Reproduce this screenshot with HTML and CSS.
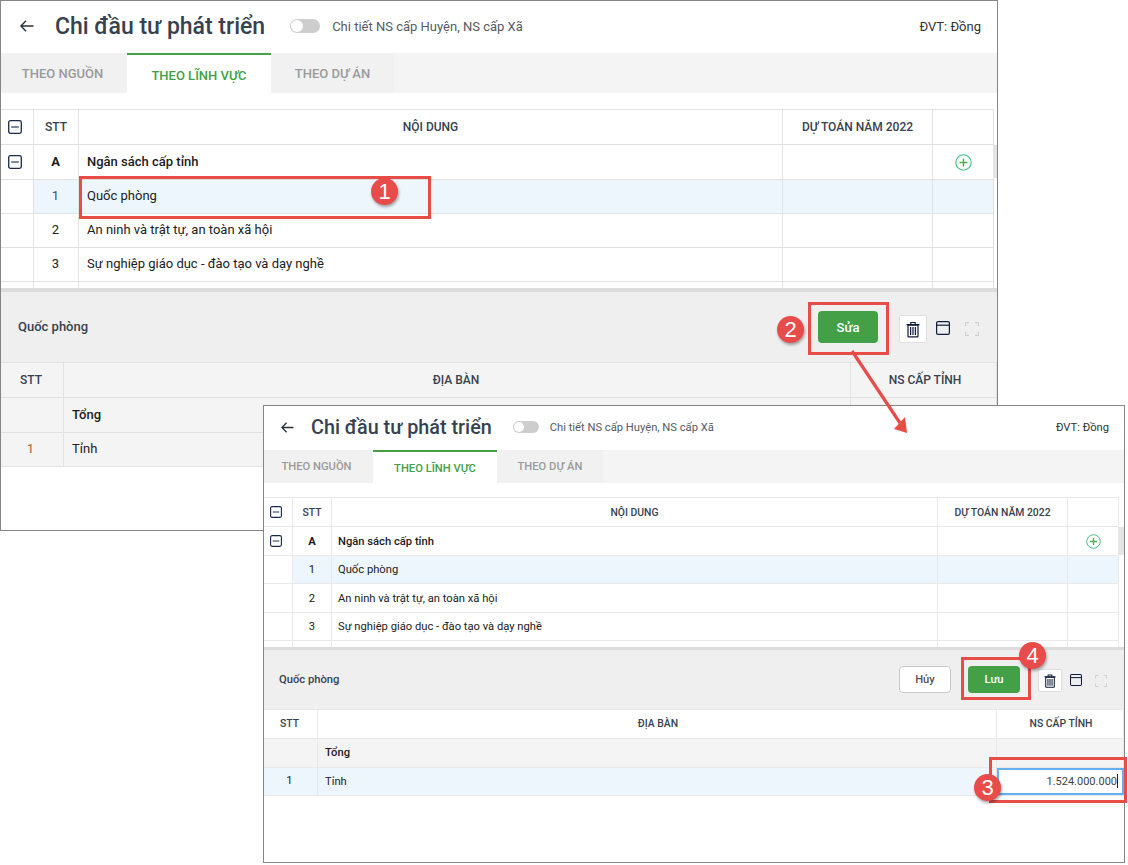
FILE: index.html
```html
<!DOCTYPE html>
<html lang="vi">
<head>
<meta charset="utf-8">
<title>Chi đầu tư phát triển</title>
<link rel="stylesheet" href="styles.css">
</head>
<body>
<svg class="defs" width="0" height="0" aria-hidden="true">
  <symbol id="i-back" viewBox="0 0 14 12"><path d="M13.5 6H1M6 .8 .9 6 6 11.2" fill="none" stroke="currentColor" stroke-width="1.4"/></symbol>
  <symbol id="i-minus" viewBox="0 0 14 14"><rect x=".7" y=".7" width="12.6" height="12.6" rx="1.8" fill="#fff" stroke="#1b2a4a" stroke-width="1.3"/><path d="M3.2 7h7.6" stroke="#5d6a80" stroke-width="1.6"/></symbol>
  <symbol id="i-plus" viewBox="0 0 17 17"><circle cx="8.5" cy="8.5" r="7.7" fill="none" stroke="#3fbf7f" stroke-width="1.1"/><path d="M8.5 4.5v8M4.5 8.5h8" stroke="#4caf50" stroke-width="1.5"/></symbol>
  <symbol id="i-trash" viewBox="0 0 14 16"><path d="M.5 3.2h13M4.8 3V1h4.4v2" fill="none" stroke="#101c3c" stroke-width="1.2"/><path d="M2 3.6h10v11.2a.6.6 0 0 1-.6.6H2.6a.6.6 0 0 1-.6-.6z" fill="none" stroke="#101c3c" stroke-width="1.2"/><path d="M4.6 5.6v8M7 5.6v8M9.4 5.6v8" stroke="#101c3c" stroke-width="1.2"/></symbol>
  <symbol id="i-panel" viewBox="0 0 14 14"><rect x=".6" y=".6" width="12.8" height="12.8" rx="1.4" fill="none" stroke="#101c3c" stroke-width="1.2"/><path d="M.6 4.2h12.8" stroke="#101c3c" stroke-width="1.2"/></symbol>
  <symbol id="i-full" viewBox="0 0 14 14"><path d="M.6 4V.6H4M10 .6h3.4V4M13.4 10v3.4H10M4 13.4H.6V10" fill="none" stroke="#cfcfcf" stroke-width="1.1"/></symbol>
</svg>

<section class="window win-a">
  <header class="win-header">
    <svg class="ico-back"><use href="#i-back"/></svg>
    <h1 class="win-title">Chi đầu tư phát triển</h1>
    <span class="toggle"><span class="knob"></span></span>
    <span class="toggle-label">Chi tiết NS cấp Huyện, NS cấp Xã</span>
    <span class="unit">ĐVT: Đồng</span>
  </header>
  <nav class="tabs">
    <span class="tab tab-1">THEO NGUỒN</span>
    <span class="tab tab-2 active">THEO LĨNH VỰC</span>
    <span class="tab tab-3">THEO DỰ ÁN</span>
  </nav>
  <div class="grid-area">
    <div class="row row-head">
      <div class="cell c-check"><svg class="ico-check"><use href="#i-minus"/></svg></div>
      <div class="cell center">STT</div><div class="cell center">NỘI DUNG</div><div class="cell center">DỰ TOÁN NĂM 2022</div><div class="cell"></div>
    </div>
    <div class="row row-a strong">
      <div class="cell c-check"><svg class="ico-check"><use href="#i-minus"/></svg></div>
      <div class="cell center">A</div><div class="cell">Ngân sách cấp tỉnh</div><div class="cell"></div><div class="cell center"><svg class="ico-plus"><use href="#i-plus"/></svg></div>
    </div>
    <div class="row row-b selected">
      <div class="cell plain"></div><div class="cell center num-blue">1</div><div class="cell">Quốc phòng</div><div class="cell"></div><div class="cell"></div>
    </div>
    <div class="row row-b">
      <div class="cell"></div><div class="cell center">2</div><div class="cell">An ninh và trật tự, an toàn xã hội</div><div class="cell"></div><div class="cell"></div>
    </div>
    <div class="row row-b">
      <div class="cell"></div><div class="cell center">3</div><div class="cell">Sự nghiệp giáo dục - đào tạo và dạy nghề</div><div class="cell"></div><div class="cell"></div>
    </div>
    <div class="row row-b">
      <div class="cell"></div><div class="cell"></div><div class="cell"></div><div class="cell"></div><div class="cell"></div>
    </div>
    <span class="scroll-thumb"></span>
  </div>
  <div class="splitter"></div>
  <div class="panel-bar">
    <span class="panel-title">Quốc phòng</span>
    <span class="actions">
      <button class="btn btn-green btn-edit">Sửa</button>
      <span class="icon-btn"><svg class="ico-trash"><use href="#i-trash"/></svg></span>
      <svg class="ico-panel"><use href="#i-panel"/></svg>
      <svg class="ico-full"><use href="#i-full"/></svg>
    </span>
  </div>
  <div class="lower">
    <div class="lrow lrow-head">
      <div class="cell center">STT</div><div class="cell center">ĐỊA BÀN</div><div class="cell center">NS CẤP TỈNH</div>
    </div>
    <div class="lrow lrow-total strong">
      <div class="cell"></div><div class="cell">Tổng</div><div class="cell"></div>
    </div>
    <div class="lrow lrow-item">
      <div class="cell center num-amber">1</div><div class="cell">Tỉnh</div><div class="cell"></div>
    </div>
  </div>
</section>

<section class="window win-b">
  <header class="win-header">
    <svg class="ico-back"><use href="#i-back"/></svg>
    <h1 class="win-title">Chi đầu tư phát triển</h1>
    <span class="toggle"><span class="knob"></span></span>
    <span class="toggle-label">Chi tiết NS cấp Huyện, NS cấp Xã</span>
    <span class="unit">ĐVT: Đồng</span>
  </header>
  <nav class="tabs">
    <span class="tab tab-1">THEO NGUỒN</span>
    <span class="tab tab-2 active">THEO LĨNH VỰC</span>
    <span class="tab tab-3">THEO DỰ ÁN</span>
  </nav>
  <div class="grid-area">
    <div class="row row-head">
      <div class="cell c-check"><svg class="ico-check"><use href="#i-minus"/></svg></div>
      <div class="cell center">STT</div><div class="cell center">NỘI DUNG</div><div class="cell center">DỰ TOÁN NĂM 2022</div><div class="cell"></div>
    </div>
    <div class="row row-a strong">
      <div class="cell c-check"><svg class="ico-check"><use href="#i-minus"/></svg></div>
      <div class="cell center">A</div><div class="cell">Ngân sách cấp tỉnh</div><div class="cell"></div><div class="cell center"><svg class="ico-plus"><use href="#i-plus"/></svg></div>
    </div>
    <div class="row row-b selected">
      <div class="cell plain"></div><div class="cell center">1</div><div class="cell">Quốc phòng</div><div class="cell"></div><div class="cell"></div>
    </div>
    <div class="row row-b">
      <div class="cell"></div><div class="cell center">2</div><div class="cell">An ninh và trật tự, an toàn xã hội</div><div class="cell"></div><div class="cell"></div>
    </div>
    <div class="row row-b">
      <div class="cell"></div><div class="cell center">3</div><div class="cell">Sự nghiệp giáo dục - đào tạo và dạy nghề</div><div class="cell"></div><div class="cell"></div>
    </div>
    <div class="row row-b">
      <div class="cell"></div><div class="cell"></div><div class="cell"></div><div class="cell"></div><div class="cell"></div>
    </div>
    <span class="scroll-thumb"></span>
  </div>
  <div class="splitter"></div>
  <div class="panel-bar">
    <span class="panel-title">Quốc phòng</span>
    <span class="actions">
      <button class="btn btn-outline">Hủy</button>
      <button class="btn btn-green btn-save">Lưu</button>
      <span class="icon-btn"><svg class="ico-trash"><use href="#i-trash"/></svg></span>
      <svg class="ico-panel"><use href="#i-panel"/></svg>
      <svg class="ico-full"><use href="#i-full"/></svg>
    </span>
  </div>
  <div class="lower">
    <div class="lrow lrow-head">
      <div class="cell center">STT</div><div class="cell center">ĐỊA BÀN</div><div class="cell center">NS CẤP TỈNH</div>
    </div>
    <div class="lrow lrow-total strong">
      <div class="cell"></div><div class="cell">Tổng</div><div class="cell"></div>
    </div>
    <div class="lrow lrow-item">
      <div class="cell center">1</div><div class="cell">Tỉnh</div><div class="cell input-cell"><span class="amount">1.524.000.000</span></div>
    </div>
  </div>
</section>

<span class="mark mark-1"></span>
<span class="mark mark-2"></span>
<span class="mark mark-3"></span>
<span class="mark mark-4"></span>
<svg class="arrow" width="70" height="95" viewBox="0 0 70 95"><path d="M1 1 49 73" stroke="#e84c47" stroke-width="3.2"/><path d="M56 83 43 79 54 67z" fill="#e84c47"/></svg>
<span class="badge badge-1">1</span>
<span class="badge badge-2">2</span>
<span class="badge badge-3">3</span>
<span class="badge badge-4">4</span>
</body>
</html>
```
FILE: styles.css
```css
* { box-sizing: border-box; }
html, body { margin: 0; padding: 0; }
body {
  width: 1128px;
  height: 865px;
  position: relative;
  overflow: hidden;
  background: #fff;
  font-family: Roboto, "Noto Sans", sans-serif;
  color: #212121;
}
.defs { position: absolute; }

/* windows on the canvas */
.window {
  position: absolute;
  display: flex;
  flex-direction: column;
  background: #fff;
  border: 1px solid #858585;
  overflow: hidden;
  font-size: var(--fs);
}
.win-a {
  left: 0; top: 0; width: 998px; height: 531px;
  --fs: 13px; --fs-head: 12px; --line: #e2e2e2;
  --cols: 33px 45px 704px 150px 61px;
  --lcols: 63px 787px 146px;
}
.win-b {
  left: 263px; top: 405px; width: 862px; height: 458px;
  --fs: 11.2px; --fs-head: 10.4px; --line: #e9e9e9;
  --cols: 29px 39px 606px 130px 51px;
  --lcols: 54px 679px 127px;
}

/* header */
.win-header { display: flex; align-items: center; flex: none; }
.win-a .win-header { height: 52px; padding: 0 16px 2px 19px; }
.win-b .win-header { height: 44px; padding: 0 15px 2px 17px; }
.ico-back { color: #263238; flex: none; }
.win-a .ico-back { width: 14px; height: 12px; margin-right: 21px; }
.win-b .ico-back { width: 13px; height: 11px; margin-right: 17px; }
.win-title { margin: 0; font-weight: 500; color: #37424f; white-space: nowrap; }
.win-a .win-title { font-size: 23px; }
.win-b .win-title { font-size: 19.8px; }
.toggle { position: relative; flex: none; background: #cdcdcd; border-radius: 8px; }
.win-a .toggle { width: 30px; height: 14px; margin-left: 25px; }
.win-b .toggle { width: 26px; height: 12px; margin-left: 21px; }
.knob { position: absolute; left: 1px; top: 1px; bottom: 1px; aspect-ratio: 1; background: #fff; border-radius: 50%; }
.toggle-label { color: #555b63; white-space: nowrap; }
.win-a .toggle-label { margin-left: 12px; }
.win-b .toggle-label { margin-left: 11px; }
.unit { margin-left: auto; color: #333; white-space: nowrap; }

/* tabs */
.tabs { display: flex; flex: none; background: #f4f4f4; }
.win-a .tabs { height: 40px; margin-bottom: 16px; }
.win-b .tabs { height: 33px; margin-bottom: 14px; }
.tab { display: flex; align-items: center; justify-content: center; font-weight: 500; color: #9a9a9a; background: #f1f1f1; white-space: nowrap; }
.tab.active { background: #fff; color: #43a047; border-top: 2px solid #43a047; padding-top: 2px; }
.win-a .tab-1 { width: 126px; padding-right: 3px; }
.win-a .tab-2 { width: 144px; }
.win-a .tab-3 { width: 123px; }
.win-b .tab-1 { width: 109px; padding-right: 4px; }
.win-b .tab-2 { width: 124px; }
.win-b .tab-3 { width: 106px; }

/* upper grid */
.grid-area { position: relative; overflow: hidden; flex: none; }
.win-a .grid-area { height: 179px; }
.win-b .grid-area { height: 150px; }
.row { display: grid; width: fit-content; grid-template-columns: var(--cols); border-bottom: 1px solid var(--line); }
.cell { display: flex; align-items: center; min-width: 0; border-right: 1px solid var(--line); white-space: nowrap; }
.win-a .cell { padding: 0 8px 2px; }
.win-b .cell { padding: 0 6px; }
.win-a .cell.center { justify-content: center; padding: 0 1px 2px 0; }
.win-b .cell.center { justify-content: center; padding: 0; }
.win-a .row-head .cell { padding-bottom: 0; padding-right: 0; }
.row-head { border-top: 1px solid var(--line); font-size: var(--fs-head); font-weight: 500; color: #37424f; }
.lrow-head { font-size: var(--fs-head); font-weight: 500; color: #37424f; }
.win-a .row-head { height: 36px; }
.win-a .row-a { height: 35px; }
.win-a .row-b { height: 34px; }
.win-b .row-head { height: 30px; }
.win-b .row-a { height: 29px; }
.win-b .row-b { height: 28.4px; }
.strong { font-weight: 500; color: #1c1c1c; }
.row-a .center { font-weight: 700; }
.selected { background: #eef6fd; }
.selected .plain { background: #fff; }
.num-blue { color: #34507a; }
.num-amber { color: #8f6a35; }
.win-a .c-check { padding: 0 0 0 7px; }
.win-b .c-check { padding: 0 0 0 6px; }
.win-a .ico-check { width: 14px; height: 14px; }
.win-b .ico-check { width: 12px; height: 12px; }
.win-a .ico-plus { width: 17px; height: 17px; margin: 2px 0 0 2px; }
.win-b .ico-plus { width: 15px; height: 15px; }
.scroll-thumb { position: absolute; right: 0; background: #e4e4e4; }
.win-a .scroll-thumb { top: 36px; width: 4px; height: 33px; }
.win-b .scroll-thumb { top: 30px; width: 5px; height: 28px; }

.splitter { background: #dcdcdc; flex: none; }
.win-a .splitter { height: 4px; }
.win-b .splitter { height: 3px; }

/* detail bar */
.panel-bar { display: flex; align-items: center; justify-content: space-between; background: #efefef; border-bottom: 1px solid var(--line); flex: none; }
.win-a .panel-bar { height: 71px; padding: 0 18px 0 17px; }
.win-b .panel-bar { height: 60px; padding: 0 17px 0 15px; }
.panel-title { font-weight: 500; color: #37424f; }
.win-a .panel-title { margin-bottom: 2px; }
.actions { display: flex; align-items: center; }
.btn { font-family: inherit; font-size: var(--fs); font-weight: 500; border-radius: 4px; padding: 0; }
.btn-green { background: #43a047; color: #fff; border: 0; }
.btn-outline { background: #fff; color: #555; border: 1px solid #c8c8c8; width: 52px; height: 27px; }
.btn-edit { width: 60px; height: 32px; }
.btn-save { width: 52px; height: 27px; margin-left: 17px; }
.icon-btn { display: flex; align-items: center; justify-content: center; background: #fff; border: 1px solid #dedede; border-radius: 2px; }
.win-a .icon-btn { width: 28px; height: 28px; margin: 4px 9px 0 21px; }
.win-b .icon-btn { width: 24px; height: 23px; margin: 2px 8px 0 18px; }
.win-a .ico-trash { width: 14px; height: 17px; }
.win-b .ico-trash { width: 12px; height: 14px; }
.win-a .ico-panel { width: 14px; height: 14px; margin-top: 1px; }
.win-b .ico-panel { width: 12px; height: 12px; }
.ico-full { flex: none; }
.win-a .ico-full { width: 14px; height: 14px; margin: 4px 0 0 15px; }
.win-b .ico-full { width: 12px; height: 12px; margin: 2px 0 0 13px; }

/* lower grid */
.lrow { display: grid; grid-template-columns: var(--lcols); border-bottom: 1px solid var(--line); }
.win-a .lrow-head .cell.center { padding: 0 2px 0 0; }
.win-a .lrow-item .cell.center { padding: 0 3px 2px 0; }
.win-a .lrow-head .cell:last-child { padding-left: 5px; }
.win-b .lrow .cell { padding-left: 7px; padding-bottom: 1px; }
.win-b .lrow .cell.center { padding: 0 2px 2px 0; }
.win-b .lrow-head .cell:nth-child(2) { padding-left: 2px; padding-right: 0; }
.win-b .lrow-head .cell:last-child { padding-left: 2px; padding-right: 0; }
.win-a .lrow { background: #f4f4f4; }
.win-a .lrow-head { height: 35px; }
.win-a .lrow-total { height: 35px; }
.win-a .lrow-item { height: 34px; }
.win-b .lrow-head { height: 29px; background: #fff; }
.win-b .lrow-total { height: 29px; background: #f4f4f4; }
.win-b .lrow-item { height: 28px; background: #eef6fd; }
.win-b .lrow .input-cell { padding: 0; border-right: 0; }
.amount { flex: 1; height: 100%; display: block; background: #fff; border: 2px solid #64b0ee; text-align: right; line-height: 23px; padding-right: 4px; color: #444; font-size: 11px; }
.amount::after { content: ""; display: inline-block; width: 1px; height: 14px; background: #222; vertical-align: -3px; }

/* annotations laid over the two windows */
.mark { position: absolute; border: 3px solid #e84c47; }
.mark-1 { left: 79px; top: 176px; width: 352px; height: 43px; }
.mark-2 { left: 808px; top: 302px; width: 81px; height: 53px; }
.mark-3 { left: 989px; top: 757px; width: 138px; height: 46px; }
.mark-4 { left: 961px; top: 657px; width: 70px; height: 43px; }
.arrow { position: absolute; left: 851px; top: 350px; }
.badge {
  position: absolute;
  width: 27px; height: 27px;
  display: flex; align-items: center; justify-content: center;
  border-radius: 50%;
  background: #e84c4a;
  color: #fff;
  font-family: "Liberation Sans", Arial, sans-serif;
  font-size: 22px;
  box-shadow: 1px 2px 3px rgba(0,0,0,.35);
}
.badge-1 { left: 371px; top: 178px; }
.badge-2 { left: 777px; top: 316px; }
.badge-3 { left: 974px; top: 774px; }
.badge-4 { left: 1019px; top: 642px; }
```
